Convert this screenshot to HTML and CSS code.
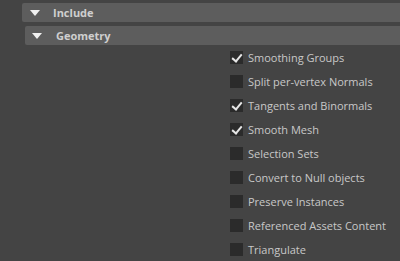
FILE: index.html
```html
<!DOCTYPE html>
<html lang="en">
<head>
    <meta charset="UTF-8">
    <title>Export Options</title>
    <link rel="stylesheet" href="styles.css">
</head>
<body>
    <div class="panel">
        <div class="section-header level-1">
            <span class="arrow"></span>
            <span class="title">Include</span>
        </div>
        <div class="section-header level-2">
            <span class="arrow"></span>
            <span class="title">Geometry</span>
        </div>

        <div class="options">
            <label class="option"><span class="box checked"></span>Smoothing Groups</label>
            <label class="option"><span class="box"></span>Split per-vertex Normals</label>
            <label class="option"><span class="box checked"></span>Tangents and Binormals</label>
            <label class="option"><span class="box checked"></span>Smooth Mesh</label>
            <label class="option"><span class="box"></span>Selection Sets</label>
            <label class="option"><span class="box"></span>Convert to Null objects</label>
            <label class="option"><span class="box"></span>Preserve Instances</label>
            <label class="option"><span class="box"></span>Referenced Assets Content</label>
            <label class="option"><span class="box"></span>Triangulate</label>
        </div>
    </div>
</body>
</html>
```

FILE: styles.css
```css
body {
    margin: 0;
    background-color: #444444;
    font-family: 'Open Sans', 'Liberation Sans', sans-serif;
    font-size: 11px;
    color: #c8c8c8;
    overflow: hidden;
}

.panel {
    padding-top: 3px;
}

.section-header {
    height: 19px;
    background-color: #5d5d5d;
    border-radius: 2px 0 0 2px;
    display: flex;
    align-items: center;
    font-weight: bold;
    color: #cfcfcf;
}

.level-1 {
    margin-left: 22px;
}

.level-2 {
    margin-left: 25px;
    margin-top: 4px;
}

.arrow {
    width: 0;
    height: 0;
    border-left: 5px solid transparent;
    border-right: 5px solid transparent;
    border-top: 6px solid #f0f0f0;
    margin-left: 8px;
    margin-right: 13px;
}

.level-2 .arrow {
    margin-left: 7px;
    margin-right: 14px;
}

.options {
    padding-left: 230px;
    display: flex;
    flex-direction: column;
}

.option {
    height: 24px;
    display: flex;
    align-items: center;
    white-space: nowrap;
}

.box {
    width: 13px;
    height: 13px;
    background-color: #2b2b2b;
    margin-right: 5px;
    position: relative;
}

.box.checked::after {
    content: "";
    position: absolute;
    left: 4px;
    top: 1px;
    width: 4px;
    height: 8px;
    border: solid #e6e6e6;
    border-width: 0 2px 2px 0;
    transform: rotate(40deg);
}
```
